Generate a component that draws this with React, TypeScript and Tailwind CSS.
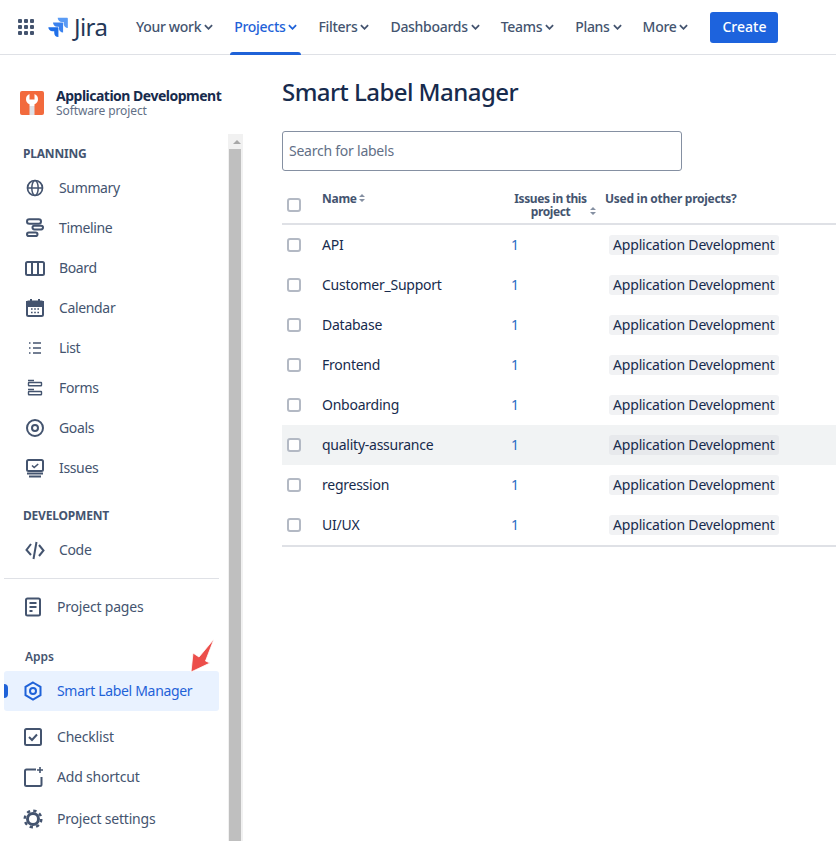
import React from 'react';

const labels = ['API', 'Customer_Support', 'Database', 'Frontend', 'Onboarding', 'quality-assurance', 'regression', 'UI/UX'];
const topNav = ['Your work', 'Projects', 'Filters', 'Dashboards', 'Teams', 'Plans', 'More'];

const Icon = ({ children, className = 'text-[#44546f]' }: { children: React.ReactNode; className?: string }) => (
  <svg viewBox="0 0 24 24" width="24" height="24" fill="none" stroke="currentColor" strokeWidth="2" className={`shrink-0 ${className}`}>
    {children}
  </svg>
);

const planning: [string, React.ReactNode][] = [
  ['Summary', <><circle cx="12" cy="12" r="7.5" strokeWidth="1.7" /><ellipse cx="12" cy="12" rx="3.2" ry="7.5" strokeWidth="1.5" /><path d="M4.5 12h15" strokeWidth="1.5" /></>],
  ['Timeline', <><rect x="4" y="3.2" width="14" height="4.6" rx="2.3" /><rect x="9.500" y="9.800" width="10.500" height="3.600" rx="1.800" /><rect x="4" y="16.500" width="10.500" height="3.600" rx="1.800" /></>],
  ['Board', <><rect x="3" y="6" width="18" height="13" rx="1.5" /><path d="M9 6v13M15 6v13" /></>],
  ['Calendar', <><rect x="4" y="5.5" width="16" height="14.500" rx="1.5" /><path d="M4 6h16v4H4z" fill="currentColor" /><path d="M8 3v4M16 3v4" /><path d="M8 13h1.6M11.2 13h1.6M14.4 13H16M8 16.5h1.6M11.2 16.5h1.6M14.4 16.5H16" strokeWidth="1.7" /></>],
  ['List', <path d="M6 7h1.5M10 7h8M6 12h1.5M10 12h8M6 17h1.5M10 17h8" strokeWidth="1.7" />],
  ['Forms', <><path d="M5 4.500h6M5 13.500h6" strokeWidth="1.300" /><rect x="5.500" y="6.500" width="13" height="3.200" strokeWidth="1.400" rx="0.500" /><rect x="5.500" y="15.500" width="13" height="3.200" strokeWidth="1.400" rx="0.500" /></>],
  ['Goals', <><circle cx="12" cy="12" r="8" /><circle cx="12" cy="12" r="3" /></>],
  ['Issues', <><rect x="4" y="4" width="16" height="11" rx="1.5" /><path d="m9 9.5 2.2 2 4-3.5" strokeWidth="1.6" /><path d="M4 17.5h16M6 20.5h12" strokeWidth="1.8" /></>],
];

const NavRow = ({ label, icon }: { label: string; icon: React.ReactNode }) => (
  <div className="flex h-10 items-center gap-3 pl-[23px] text-sm tracking-[-0.35px] text-[#44546f]">
    <Icon>{icon}</Icon>
    <span>{label}</span>
  </div>
);

const LowerRow = ({ label, icon, className = 'h-10' }: { label: string; icon: React.ReactNode; className?: string }) => (
  <div className={`flex items-center gap-3 pl-[21px] text-sm tracking-[-0.2px] text-[#44546f] ${className}`}>
    <Icon>{icon}</Icon>
    <span>{label}</span>
  </div>
);

const Checkbox = () => <span className="block h-[14px] w-[14px] rounded-[3px] border-2 border-[#b3b9c4] bg-white" />;

const SortArrows = ({ className = '' }: { className?: string }) => (
  <svg viewBox="0 0 6 8" width="6" height="8" fill="#8590a2" className={className}>
    <path d="M3 0 6 3H0zM3 8 0 5h6z" />
  </svg>
);

const Header = () => (
  <header className="flex h-[55px] items-center border-b border-[#dfe1e6] bg-white">
    <div className="ml-[18px] grid w-4 grid-cols-3 gap-[2px]">
      {Array.from({ length: 9 }).map((_, i) => (
        <span key={i} className="h-1 w-1 rounded-[1px] bg-[#44546f]" />
      ))}
    </div>
    <svg viewBox="0 0 24 24" width="20" height="20" className="ml-[14px]">
      <path d="M23 1H11.6a5 5 0 0 0 5 5h2.2v2.100a5 5 0 0 0 5 5V2a1 1 0 0 0-.8-1z" fill="#5a9bf5" />
      <path d="M17.400 6.600H6a5 5 0 0 0 5 5h2.100v2.100a5 5 0 0 0 5 5V7.600a1 1 0 0 0-.7-1z" fill="#3b82ee" />
      <path d="M11.800 12.200H.4a5 5 0 0 0 5 5h2.100v2.100a5 5 0 0 0 5 4.700V13.200a1 1 0 0 0-.7-1z" fill="#1f6fe8" />
    </svg>
    <span className="ml-[6px] w-[34px] text-2xl leading-none font-normal tracking-tight text-[#253858]">Jira</span>
    <nav className="ml-6 flex h-full items-center gap-[13px] tracking-[-0.3px]">
      {topNav.map((item) => {
        const active = item === 'Projects';
        return (
          <div
            key={item}
            className={`relative flex h-full items-center gap-[3px] px-1 text-sm font-medium ${active ? 'text-[#1f62d8]' : 'text-[#44546f]'}`}
          >
            {item}
            <svg viewBox="0 0 10 6" width="9" height="6" fill="none" stroke="currentColor" strokeWidth="2">
              <path d="m1 1 4 4 4-4" />
            </svg>
            {active && <span className="absolute right-0 bottom-[-1px] left-0 h-[3px] rounded-t-sm bg-[#1f62d8]" />}
          </div>
        );
      })}
    </nav>
    <button className="ml-[18px] h-[31px] w-[68px] rounded-[3px] bg-[#1d63dd] text-sm font-medium text-white">Create</button>
  </header>
);

const Sidebar = () => (
  <aside className="relative flex w-[243px] shrink-0 overflow-hidden">
    <div className="w-[228px] shrink-0 pt-[33px]">
      <div className="flex h-[30px] items-center gap-3 pl-5">
        <svg viewBox="0 0 24 24" width="24" height="24" className="shrink-0">
          <rect width="24" height="24" rx="2" fill="#f26a3d" />
          <path d="M9.500 3v5.500h5V3c2.300.9 3.500 3 3.500 5.200 0 2.300-1.300 4.200-3.500 5V15h-5v-1.800C7.300 12.400 6 10.500 6 8.200 6 6 7.200 3.900 9.500 3z" fill="#fff" />
          <path d="M9.500 15h5v9h-5z" fill="#dfe1e6" />
        </svg>
        <div className="leading-none whitespace-nowrap">
          <div className="text-sm leading-4 font-bold tracking-[-0.5px] text-[#172b4d]">Application Development</div>
          <div className="text-xs leading-[14px] tracking-[-0.1px] text-[#626f86]">Software project</div>
        </div>
      </div>
      <div className="mt-7 mb-[6px] h-4 pl-[23px] text-xs leading-4 font-bold tracking-[-0.2px] text-[#44546f]">PLANNING</div>
      {planning.map(([label, icon]) => (
        <NavRow key={label} label={label} icon={icon} />
      ))}
      <div className="mt-5 mb-[6px] h-4 pl-[23px] text-xs leading-4 font-bold tracking-[-0.2px] text-[#44546f]">DEVELOPMENT</div>
      <NavRow label="Code" icon={<path d="M8 6 3.500 12 8 17M16 7l4.500 5.500L16 18M13.500 4l-3 17" />} />
      <div className="mt-2 ml-1 h-px w-[215px] bg-[#dfe1e6]" />
      <LowerRow label="Project pages" icon={<><rect x="5" y="3.500" width="14" height="17" rx="1.500" /><path d="M8.500 8h7M8.500 12h7M8.500 16h3" strokeWidth="1.800" /></>} className="mt-2 h-10" />
      <div className="mt-[22px] mb-[6px] h-4 pl-[25px] text-xs leading-4 font-semibold text-[#44546f]">Apps</div>
      <div className="relative ml-1 flex h-10 w-[215px] items-center gap-3 rounded-[3px] bg-[#e9f2ff] pl-[17px] text-sm tracking-[-0.32px] text-[#1f62d8]">
        <span className="absolute top-[13px] left-0 h-[14px] w-1 rounded-r-sm bg-[#1f62d8]" />
        <Icon className="text-[#1f62d8]"><path d="m12 3.500 7.500 4.300v8.400L12 20.500l-7.500-4.300V7.800z" /><circle cx="12" cy="12" r="3" /></Icon>
        <span>Smart Label Manager</span>
      </div>
      <LowerRow label="Checklist" icon={<><rect x="4" y="4" width="16" height="16" rx="1.500" /><path d="m8 12 3 3 5-5.500" /></>} className="mt-[6px] h-10" />
      <LowerRow label="Add shortcut" icon={<><path d="M15 4.500H5.500a1.500 1.500 0 0 0-1.500 1.500v13.500a1.500 1.500 0 0 0 1.500 1.500H19a1.500 1.500 0 0 0 1.500-1.500V12" /><path d="M19 2v6M16 5h6" strokeWidth="1.600" /></>} />
      <LowerRow label="Project settings" icon={<><circle cx="12" cy="12" r="5.500" strokeWidth="3" /><circle cx="12" cy="12" r="8.300" strokeWidth="2.400" strokeDasharray="3.300 3.220" /></>} className="mt-[2px] h-10" />
    </div>
    <div className="mt-[79px] flex w-[15px] flex-col bg-[#f1f1f1]">
      <div className="flex h-[15px] items-center justify-center pl-[2px]">
        <span className="h-0 w-0 border-x-[4px] border-b-[4px] border-x-transparent border-b-[#a8a8a8]" />
      </div>
      <div className="ml-[1px] w-[12px] flex-1 bg-[#bfbfbf]" />
    </div>
    {/* annotation arrow on top of the nav */}
    <svg viewBox="0 0 30 40" width="30" height="40" className="absolute top-[581px] left-[188px]">
      <path d="M3 36 5 17l6 4L26 3l-8.500 22 4.500 2z" fill="#ec4e4a" stroke="#fff" strokeWidth="0.800" />
    </svg>
  </aside>
);

const LabelTable = () => (
  <div className="mt-[13px] w-[554px] border-b-2 border-[#dfe1e6] text-sm text-[#172b4d]">
    <div className="grid h-[41px] grid-cols-[40px_192px_91px_1fr] border-b-2 border-[#dfe1e6] text-xs font-bold tracking-[-0.27px] text-[#44546f]">
      <div className="flex items-center pt-[2px] pl-[5px]">
        <Checkbox />
      </div>
      <div className="flex items-start gap-[2px] pt-2">
        <span className="leading-[13px]">Name</span>
        <SortArrows className="mt-[2px]" />
      </div>
      <div className="relative w-[73px] pt-2 text-center leading-[13px] tracking-[-0.4px] whitespace-nowrap">
        Issues in this
        <br />
        project
        <SortArrows className="absolute right-[-9px] bottom-2" />
      </div>
      <div className="pt-2 leading-[13px]">Used in other projects?</div>
    </div>
    {labels.map((label) => {
      const hovered = label === 'quality-assurance';
      return (
        <div key={label} className={`grid h-10 grid-cols-[40px_192px_91px_1fr] items-center ${hovered ? 'bg-[#f1f3f4]' : ''}`}>
          <div className="pl-[5px]">
            <Checkbox />
          </div>
          <div className="tracking-[-0.25px]">{label}</div>
          <div className="-ml-[3px] text-[#2b6cc4]">1</div>
          <div>
            <span
              className={`ml-1 inline-block rounded-[3px] px-1 leading-5 tracking-[-0.17px] whitespace-nowrap ${hovered ? 'bg-[#e7e9ec]' : 'bg-[#f1f2f4]'}`}
            >
              Application Development
            </span>
          </div>
        </div>
      );
    })}
  </div>
);

export default function App() {
  return (
    <div className="flex h-[841px] w-[836px] flex-col overflow-hidden bg-white font-['Noto_Sans','Open_Sans',sans-serif]">
      <Header />
      <div className="flex min-h-0 flex-1">
        <Sidebar />
        <main className="min-w-0 flex-1 pt-[19px] pl-[39px]">
          <h1 className="text-2xl leading-9 font-medium tracking-[-0.55px] text-[#172b4d]">Smart Label Manager</h1>
          <div className="mt-[21px] flex h-10 w-[400px] items-center rounded-[3px] border border-[#8590a2] pl-[6px] text-sm tracking-[-0.24px] text-[#626f86]">
            Search for labels
          </div>
          <LabelTable />
        </main>
      </div>
    </div>
  );
}
